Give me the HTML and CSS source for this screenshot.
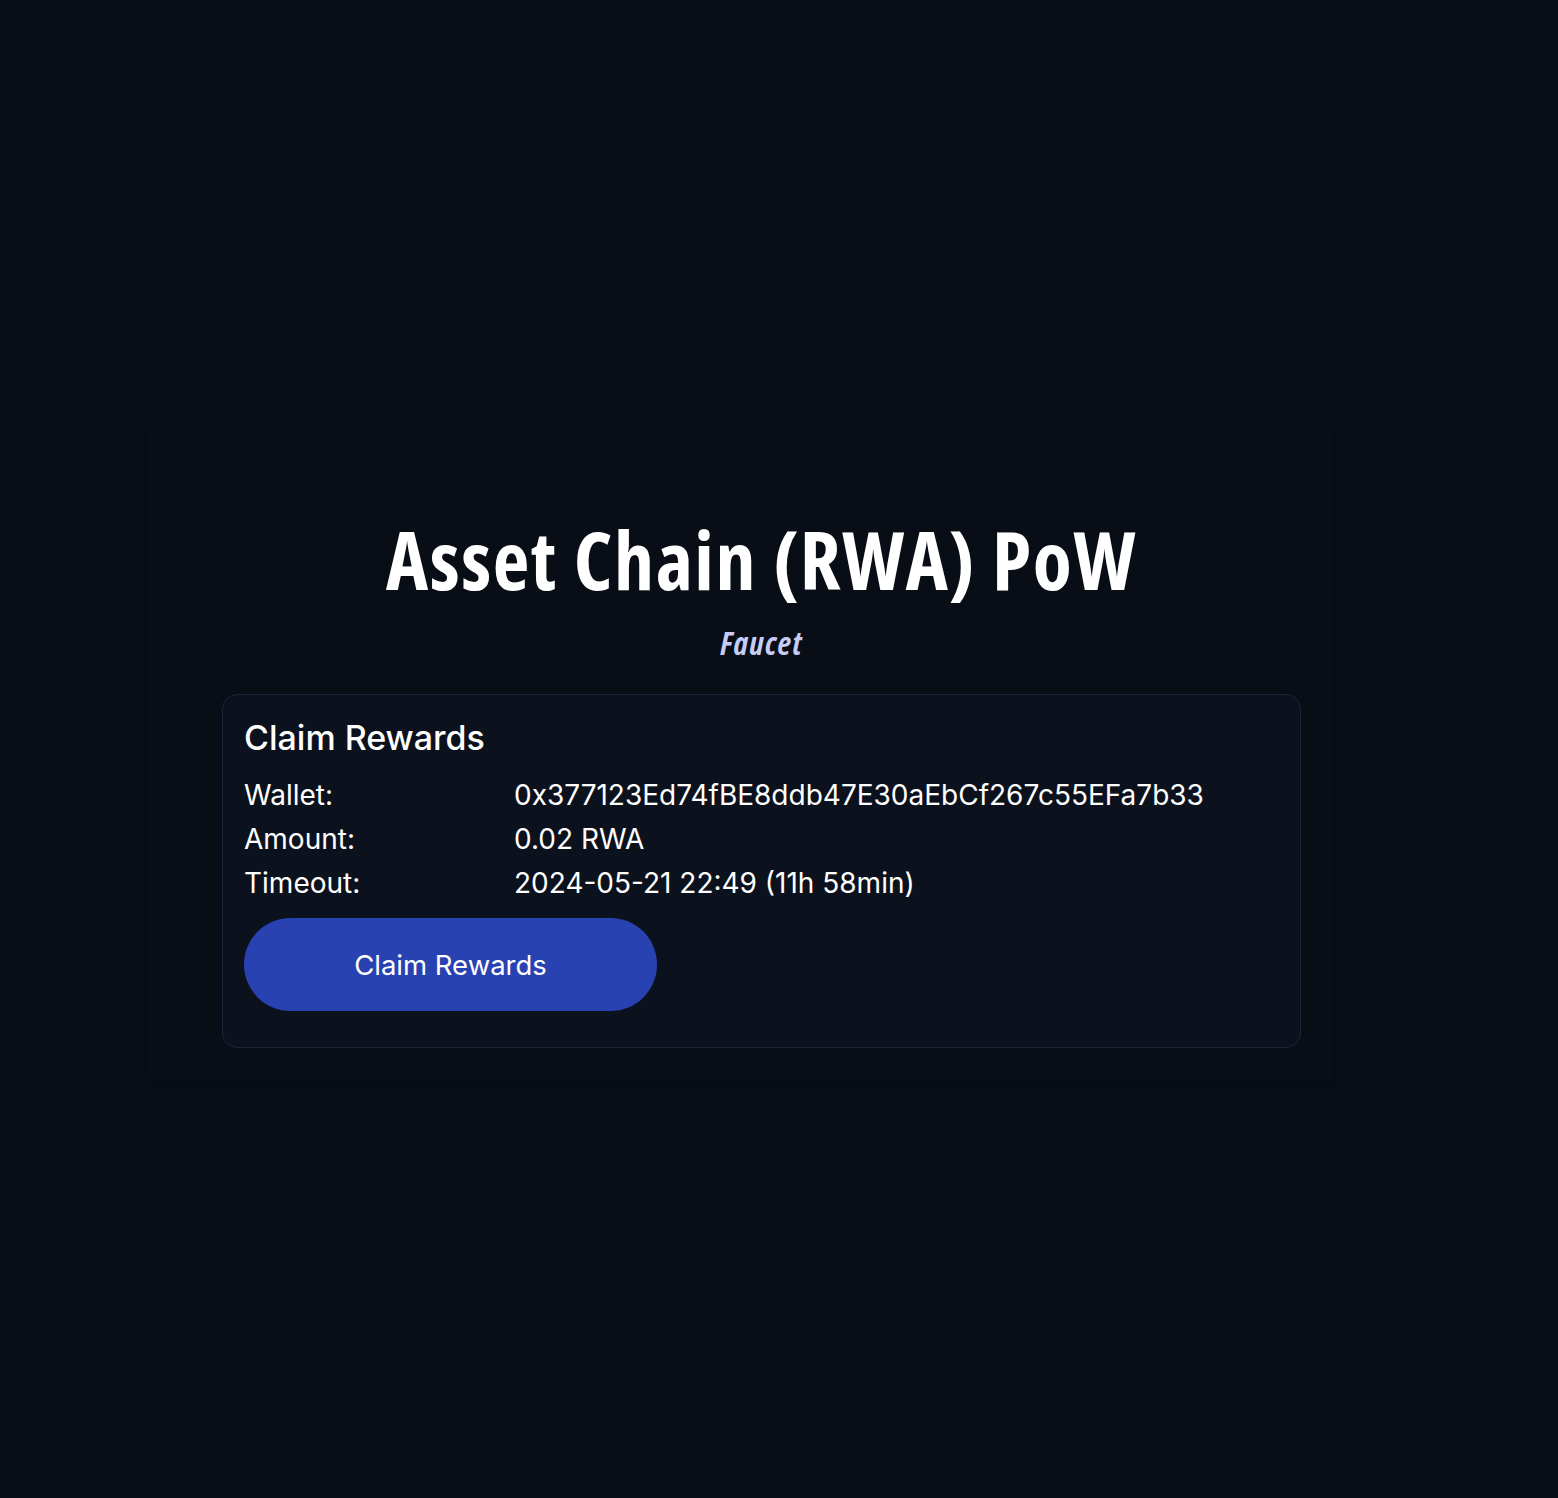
FILE: index.html
```html
<!DOCTYPE html>
<html lang="en">
<head>
<meta charset="utf-8">
<title>Asset Chain (RWA) PoW Faucet</title>
<link rel="stylesheet" href="styles.css">
</head>
<body>
<main class="wrapper">
  <header class="hero">
    <h1 class="title">Asset Chain (RWA) PoW</h1>
    <div class="subtitle">Faucet</div>
  </header>
  <section class="card">
    <h2 class="card-title">Claim Rewards</h2>
    <div class="rows">
      <div class="label">Wallet:</div><div class="value">0x377123Ed74fBE8ddb47E30aEbCf267c55EFa7b33</div>
      <div class="label">Amount:</div><div class="value">0.02 RWA</div>
      <div class="label">Timeout:</div><div class="value">2024-05-21 22:49 (11h 58min)</div>
    </div>
    <button class="claim-btn" type="button">Claim Rewards</button>
  </section>
</main>
</body>
</html>
```

FILE: styles.css
```css
html, body {
  margin: 0;
  padding: 0;
  background: #080d16;
  color: #ffffff;
}
body {
  min-height: 1498px;
  font-family: Inter, "Noto Sans", "Liberation Sans", sans-serif;
  padding-top: 423px;
  box-sizing: border-box;
}
.wrapper {
  margin-left: 148px;
  width: 1185px;
  box-sizing: border-box;
  padding: 90px 32px 32px 74px;
  background: #080d16;
  box-shadow: 0 2px 14px rgba(0, 0, 0, 0.18);
  border-radius: 6px;
}
.hero {
  text-align: center;
}
.title {
  margin: 0;
  font-family: "Open Sans", "Liberation Sans", sans-serif;
  font-stretch: 75%;
  font-weight: 700;
  font-size: 80px;
  line-height: 92px;
  letter-spacing: 1.6px;
}
.subtitle {
  margin-top: 19px;
  font-family: "Open Sans", "Liberation Sans", sans-serif;
  font-stretch: 75%;
  font-style: italic;
  font-weight: 700;
  font-size: 32px;
  line-height: 38px;
  letter-spacing: 1.2px;
  color: #c6ccf6;
}
.card {
  margin-top: 32px;
  background: #0c121d;
  border: 1px solid #1f2338;
  border-radius: 15px;
  padding: 21px 21px 36px 21px;
}
.card-title {
  margin: 0 0 13px 0;
  font-size: 34px;
  font-weight: 500;
  line-height: 44px;
}
.rows {
  display: grid;
  grid-template-columns: 270px 1fr;
  font-size: 28px;
  line-height: 44px;
}
.claim-btn {
  display: block;
  margin-top: 13px;
  width: 413px;
  height: 93px;
  border: none;
  border-radius: 47px;
  background: #2942b1;
  color: #ffffff;
  font-family: Inter, "Noto Sans", "Liberation Sans", sans-serif;
  font-size: 27.5px;
  cursor: pointer;
}
```
